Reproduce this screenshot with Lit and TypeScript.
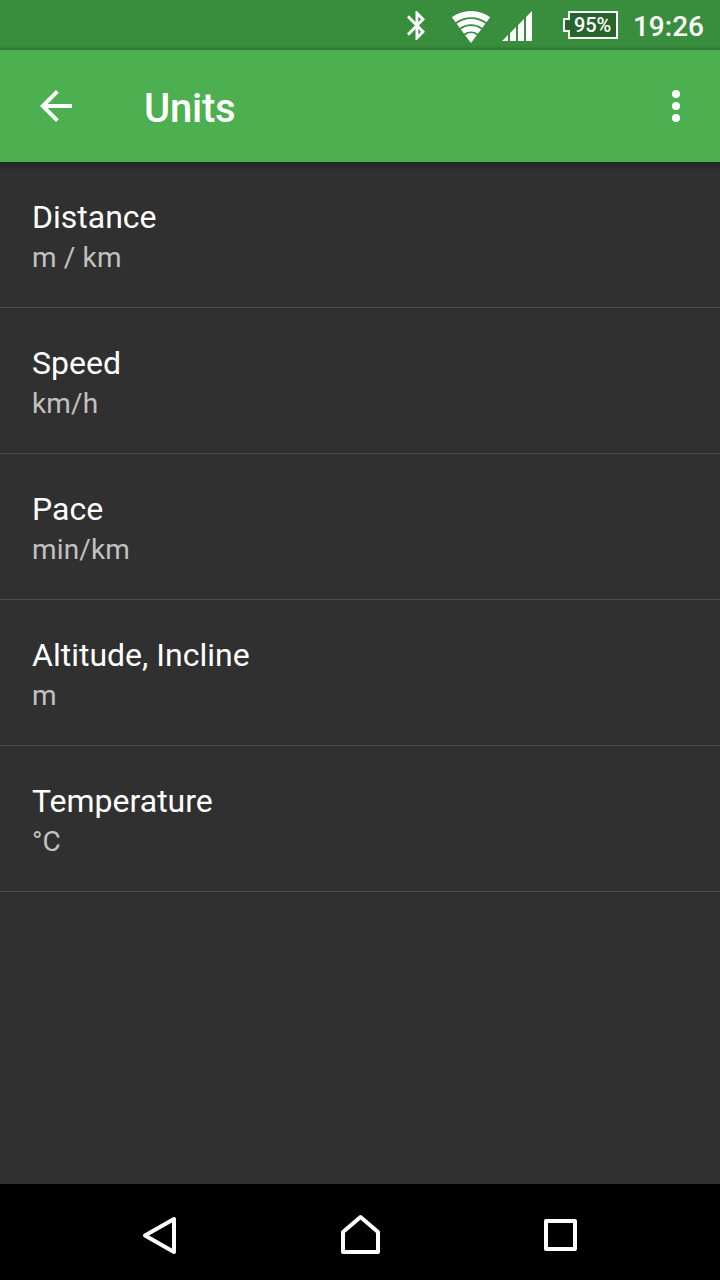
import { LitElement, html, css, svg } from "lit";
import { customElement } from "lit/decorators.js";

const CX = 20;
const CY = 32;
const HALF = 0.64;

/* One band of the wifi fan, between two radii around its foot. */
const band = (outer: number, inner: number) => {
  const p = (r: number, s: number) =>
    `${(CX + s * r * Math.sin(HALF)).toFixed(2)} ${(CY - r * Math.cos(HALF)).toFixed(2)}`;
  return inner > 0
    ? `M${p(outer, -1)}A${outer} ${outer} 0 0 1 ${p(outer, 1)}L${p(inner, 1)}A${inner} ${inner} 0 0 0 ${p(inner, -1)}Z`
    : `M${p(outer, -1)}A${outer} ${outer} 0 0 1 ${p(outer, 1)}L${CX} ${CY}Z`;
};
const bands = [[32, 25.8], [24.1, 18.8], [17.1, 11.6], [9.8, 0]];

@customElement("status-bar")
class StatusBar extends LitElement {
  static styles = css`
    :host { display: flex; box-sizing: border-box; height: 50px; padding: 0 16px 0 407px; align-items: flex-start; color: #fff;
      background: linear-gradient(#388e3c 45px, #34823a 48px, #2f7433 50px); font-family: Roboto, sans-serif; }
    svg { display: block; flex: none; fill: #fff; }
    .bt { margin-top: 11px; }
    .wifi { margin: 11px 0 0 26px; }
    .signal { margin: 11px 0 0 11px; }
    .battery { display: grid; margin: 11px 0 0 31px; width: 55px; height: 28px; flex: none; }
    .battery > * { grid-area: 1 / 1; }
    .level { font-size: 20px; font-weight: 500; line-height: 28px; padding-left: 11px; letter-spacing: -0.1px; white-space: nowrap; }
    .clock { margin-left: auto; font-size: 28px; font-weight: 500; line-height: 53px; white-space: nowrap; }
  `;
  render() {
    return html`
      <svg class="bt" width="18" height="29" viewBox="5 2 12.71 20" preserveAspectRatio="none">
        <path d="M17.71 7.71L12 2h-1v7.59L6.41 5 5 6.41 10.59 12 5 17.59 6.41 19 11 14.41V22h1l5.71-5.71-4.3-4.29 4.3-4.29zM13 5.83l1.88 1.88L13 9.59V5.83zm1.88 10.46L13 18.17v-3.76l1.88 1.88z"/>
      </svg>
      <svg class="wifi" width="40" height="32" viewBox="0 0 40 32">${bands.map(([o, i]) => svg`<path d=${band(o, i)} />`)}</svg>
      <svg class="signal" width="30" height="30" viewBox="0 0 30 30">
        <path d="M0 30L6 24V30ZM8 30V22L14 16V30ZM16 30V14L22 8V30ZM24 30V6L30 0V30Z"/>
      </svg>
      <div class="battery">
        <svg width="55" height="28" viewBox="0 0 55 28">
          <path d="M6 1H54V27H6V20H1V8H6Z" fill="#27632a" stroke="#fff" stroke-width="2"/>
        </svg>
        <span class="level">95%</span>
      </div>
      <span class="clock">19:26</span>
    `;
  }
}

@customElement("tool-bar")
class ToolBar extends LitElement {
  static styles = css`
    :host { display: flex; box-sizing: border-box; height: 112px; padding: 0 40px; align-items: center; background: #4caf50; color: #fff; }
    svg { display: block; flex: none; fill: #fff; }
    .title { margin: 6px auto 0 72px; font: 500 40px/48px Roboto, sans-serif; letter-spacing: -0.25px; }
  `;
  render() {
    return html`
      <svg width="32" height="32" viewBox="4 4 16 16"><path d="M20 11H7.83l5.59-5.59L12 4l-8 8 8 8 1.41-1.41L7.83 13H20v-2z"/></svg>
      <span class="title">Units</span>
      <svg width="8" height="32" viewBox="0 0 8 32"><circle cx="4" cy="4" r="4"/><circle cx="4" cy="16" r="4"/><circle cx="4" cy="28" r="4"/></svg>
    `;
  }
}

@customElement("unit-list")
class UnitList extends LitElement {
  static styles = css`
    :host { display: block; flex: 1; background: linear-gradient(#252525, #303030 9px); font-family: Roboto, sans-serif; }
    .row { box-sizing: border-box; height: 146px; padding: 36px 32px 0; border-bottom: 1px solid #4d4d4d; }
    .name { font-size: 32px; line-height: 38px; color: #fff; }
    .value { font-size: 28px; line-height: 33px; margin-top: 5px; color: #c1c1c1; letter-spacing: 0.15px; }
  `;
  private items = [
    ["Distance", "m / km"],
    ["Speed", "km/h"],
    ["Pace", "min/km"],
    ["Altitude, Incline", "m"],
    ["Temperature", "°C"],
  ];
  render() {
    return this.items.map(([name, value]) => html`
      <div class="row"><div class="name">${name}</div><div class="value">${value}</div></div>
    `);
  }
}

@customElement("nav-bar")
class NavBar extends LitElement {
  static styles = css`
    :host { display: flex; box-sizing: border-box; height: 96px; padding: 0 60px; background: #000; }
    .cell { flex: 1; display: flex; justify-content: center; padding-top: 30px; }
    svg { display: block; fill: none; stroke: #fff; stroke-width: 4; stroke-linejoin: round; }
  `;
  render() {
    return html`
      <div class="cell"><svg width="40" height="42" viewBox="140 1214 40 42"><path d="M174 1219V1252L145 1235.5Z"/></svg></div>
      <div class="cell"><svg width="40" height="42" viewBox="340 1214 40 42"><path d="M343 1252V1232L360.500 1217L378 1232V1252Z"/></svg></div>
      <div class="cell"><svg width="40" height="42" viewBox="540 1214 40 42"><path d="M546 1221H575V1249H546Z"/></svg></div>
    `;
  }
}

@customElement("app-root")
class AppRoot extends LitElement {
  static styles = css`
    :host { display: flex; flex-direction: column; width: 720px; height: 1280px; overflow: hidden; background: #303030; }
  `;
  render() {
    return html`<status-bar></status-bar><tool-bar></tool-bar><unit-list></unit-list><nav-bar></nav-bar>`;
  }
}
